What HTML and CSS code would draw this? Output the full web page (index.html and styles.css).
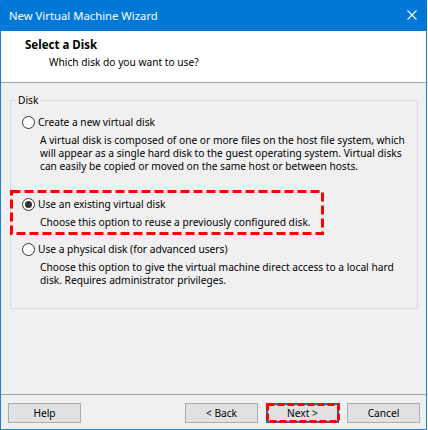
FILE: index.html
```html
<!DOCTYPE html>
<html>
<head>
<meta charset="utf-8">
<title>New Virtual Machine Wizard</title>
<link rel="stylesheet" href="styles.css">
</head>
<body>
<div class="window">
  <div class="titlebar">
    <span class="title">New Virtual Machine Wizard</span>
    <svg class="close" width="10" height="10" viewBox="0 0 10 10"><path d="M0.5 0.5 L9.5 9.5 M9.5 0.5 L0.5 9.5" stroke="#fff" stroke-width="1.1" fill="none"/></svg>
  </div>
  <div class="header">
    <div class="h-title">Select a Disk</div>
    <div class="h-sub">Which disk do you want to use?</div>
  </div>
  <div class="content">
    <fieldset class="group">
      <legend class="legend">Disk</legend>
      <div class="opt opt-first">
        <div class="row"><span class="radio"></span><span class="label">Create a new virtual disk</span></div>
        <div class="desc">A virtual disk is composed of one or more files on the host file system, which<br>will appear as a single hard disk to the guest operating system. Virtual disks<br>can easily be copied or moved on the same host or between hosts.</div>
      </div>
      <div class="opt opt-second marked">
        <div class="row"><span class="radio checked"></span><span class="label">Use an existing virtual disk</span></div>
        <div class="desc">Choose this option to reuse a previously configured disk.</div>
        <svg class="mark mark-opt" width="314" height="45" viewBox="0 0 314 45"><rect x="1.5" y="1.5" width="311" height="42" fill="none" stroke="#f00" stroke-width="3" stroke-dasharray="9 4"/></svg>
      </div>
      <div class="opt opt-third">
        <div class="row"><span class="radio"></span><span class="label">Use a physical disk (for advanced users)</span></div>
        <div class="desc">Choose this option to give the virtual machine direct access to a local hard<br>disk. Requires administrator privileges.</div>
      </div>
    </fieldset>
    <div class="spacer"></div>
    <div class="buttons">
      <button class="btn">Help</button>
      <div class="spacer-h"></div>
      <button class="btn">&lt; Back</button>
      <div class="btn-wrap">
        <button class="btn btn-default">Next &gt;</button>
        <svg class="mark mark-btn" width="74" height="20" viewBox="0 0 74 20"><rect x="1.5" y="1.5" width="71" height="17" fill="none" stroke="#f00" stroke-width="3" stroke-dasharray="7 3"/></svg>
      </div>
      <button class="btn">Cancel</button>
    </div>
  </div>
</div>
</body>
</html>
```
FILE: styles.css
```css
html, body {
  margin: 0;
  padding: 0;
  background: #fff;
}
body {
  font-family: "Noto Sans", "Open Sans", sans-serif;
  font-size: 10.2px;
  color: #000;
}
.window {
  width: 427px;
  height: 430px;
  box-sizing: border-box;
  border: 1px solid #1a80d8;
  border-top: none;
  display: flex;
  flex-direction: column;
}
.titlebar {
  height: 31px;
  margin: 0 -1px;
  background: #0078d7;
  display: flex;
  align-items: center;
  justify-content: space-between;
  padding: 0 10px 0 9px;
  border-top-right-radius: 2px;
  border-top-left-radius: 2px;
}
.title {
  color: #fff;
  font-size: 11.3px;
  line-height: 31px;
  white-space: nowrap;
}
.close {
  display: block;
  margin-top: -1px;
}
.header {
  height: 51px;
  background: #fff;
  border-bottom: 1px solid #a0a0a0;
  padding: 7px 0 0 24px;
  box-sizing: border-box;
  height: 52px;
}
.h-title {
  font-weight: bold;
  font-size: 11.5px;
  line-height: 14px;
  white-space: nowrap;
}
.h-sub {
  margin: 3px 0 0 24px;
  line-height: 14px;
  white-space: nowrap;
}
.content {
  flex: 1;
  background: #f0f0f0;
  display: flex;
  flex-direction: column;
  padding-top: 11px;
}
.group {
  margin: 0 8px 0 9px;
  padding: 0 0 21px 0;
  border: 1px solid #dcdcdc;
  min-width: 0;
}
.legend {
  margin-left: 5px;
  padding: 0 2px;
  line-height: 13px;
  height: 13px;
}
.opt {
  padding-left: 11px;
}
.opt-first { margin-top: 7px; }
.opt-second { margin-top: 23px; }
.opt-third { margin-top: 12px; }
.marked { position: relative; }
.row {
  display: flex;
  align-items: center;
  height: 16px;
}
.radio {
  width: 13px;
  height: 13px;
  box-sizing: border-box;
  border: 1px solid #333;
  border-radius: 50%;
  background: #fff;
  position: relative;
  flex: none;
}
.radio.checked::after {
  content: "";
  position: absolute;
  left: 2px;
  top: 2px;
  width: 7px;
  height: 7px;
  border-radius: 50%;
  background: #333;
}
.label {
  margin-left: 3px;
  line-height: 16px;
  white-space: nowrap;
}
.desc {
  margin: 4px 0 0 18px;
  line-height: 13px;
  white-space: nowrap;
}
.mark {
  position: absolute;
  display: block;
  pointer-events: none;
}
.mark-opt {
  left: -1px;
  top: -6px;
}
.spacer { flex: 1; }
.buttons {
  border-top: 1px solid #a0a0a0;
  display: flex;
  padding: 8px 6px 6px 7px;
  height: 35px;
  box-sizing: border-box;
}
.spacer-h { flex: 1; }
.btn {
  width: 73px;
  height: 20px;
  box-sizing: border-box;
  margin: 0;
  padding: 0;
  background: #e1e1e1;
  border: 1px solid #adadad;
  font-family: "Noto Sans", "Open Sans", sans-serif;
  font-size: 10.2px;
  color: #000;
  line-height: 18px;
  text-align: center;
}
.btn + .btn-wrap, .btn-wrap + .btn { margin-left: 8px; }
.btn-wrap {
  position: relative;
  width: 73px;
  height: 20px;
}
.btn-default {
  border: 1px solid #0078d7;
  box-shadow: inset 0 0 0 1px #0078d7;
}
.mark-btn {
  left: 0;
  top: 0;
}
```
